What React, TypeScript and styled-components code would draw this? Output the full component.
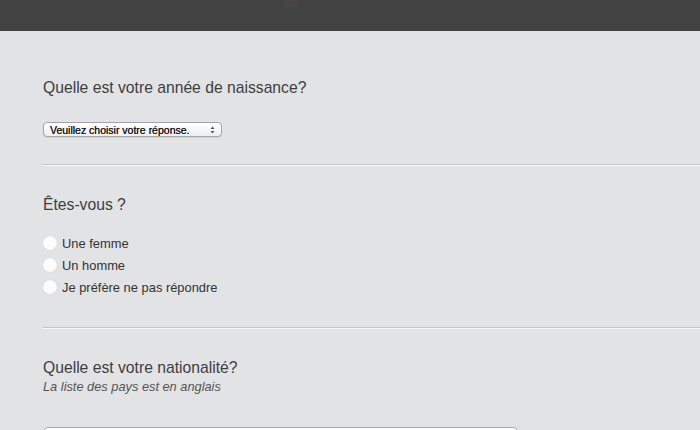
import React from "react";
import styled, { createGlobalStyle } from "styled-components";

const GlobalStyle = createGlobalStyle`
  html, body {
    margin: 0;
    padding: 0;
    background: #e2e3e5;
    font-family: "Liberation Sans", Arial, sans-serif;
    overflow: hidden;
  }
  #root {
    height: 430px;
    overflow: hidden;
  }
`;

const TopBar = styled.div`
  height: 31px;
  background: #424242;
  position: relative;
`;

const Logo = styled.div`
  position: absolute;
  left: 284px;
  top: -4px;
  width: 14px;
  height: 12px;
  border-radius: 50%;
  background: radial-gradient(circle at 50% 35%, #4d4343 0%, #444846 60%, #424242 100%);
`;

const Page = styled.div`
  padding-left: 43px;
`;

const Section = styled.section<{ $top: number; $bottom: number }>`
  padding-top: ${(p) => p.$top}px;
  padding-bottom: ${(p) => p.$bottom}px;
`;

const Separator = styled.hr`
  margin: 0;
  height: 0;
  border: none;
  border-top: 1px solid #c3c4c6;
  border-bottom: 1px solid #f7f7f8;
`;

const Question = styled.h2`
  margin: 0;
  font-size: 15.7px;
  line-height: 20px;
  font-weight: normal;
  color: #3e3e3e;
`;

const Hint = styled.p`
  margin: 1px 0 0;
  font-size: 12.8px;
  line-height: 16px;
  font-style: italic;
  color: #555;
`;

const Select = styled.div`
  margin-top: 24px;
  width: 179px;
  height: 15px;
  box-sizing: border-box;
  border: 1px solid #a4a4a4;
  border-radius: 4px;
  background: linear-gradient(#ffffff, #eeeeee);
  box-shadow: 0 1px 1px rgba(0, 0, 0, 0.08);
  display: flex;
  align-items: center;
  justify-content: space-between;
  padding: 0 6px 0 6px;
  font-size: 10.5px;
  color: #1e1e1e;
  text-shadow: 0 0 0.3px #1e1e1e;
`;

const RadioList = styled.div`
  margin-top: 17px;
  display: flex;
  flex-direction: column;
`;

const RadioRow = styled.label`
  height: 22px;
  display: flex;
  align-items: center;
  gap: 5px;
  font-size: 12.9px;
  color: #333;
`;

const RadioDot = styled.span`
  width: 14px;
  height: 14px;
  border-radius: 50%;
  background: #fcfcfc;
  box-shadow: 0 0 1px rgba(0, 0, 0, 0.15);
`;

const TextInput = styled.div`
  margin-top: 32px;
  width: 475px;
  height: 30px;
  box-sizing: border-box;
  border: 1px solid #a6a6a6;
  border-radius: 5px;
  background: #fff;
`;

const options = ["Une femme", "Un homme", "Je préfère ne pas répondre"];

const SelectArrows = () => (
  <svg width="5" height="8" viewBox="0 0 5 8">
    <path d="M2.5 0.5 L4.5 3 H0.5 Z M2.5 7.5 L4.5 5 H0.5 Z" fill="#555" />
  </svg>
);

export default function App() {
  return (
    <>
      <GlobalStyle />
      <TopBar>
        <Logo />
      </TopBar>
      <Page>
        <Section $top={47} $bottom={27}>
          <Question>Quelle est votre année de naissance?</Question>
          <Select>
            <span>Veuillez choisir votre réponse.</span>
            <SelectArrows />
          </Select>
        </Section>
        <Separator />
        <Section $top={29} $bottom={29}>
          <Question>Êtes-vous ?</Question>
          <RadioList>
            {options.map((o) => (
              <RadioRow key={o}>
                <RadioDot />
                {o}
              </RadioRow>
            ))}
          </RadioList>
        </Section>
        <Separator />
        <Section $top={29} $bottom={0}>
          <Question>Quelle est votre nationalité?</Question>
          <Hint>La liste des pays est en anglais</Hint>
          <TextInput />
        </Section>
      </Page>
    </>
  );
}
